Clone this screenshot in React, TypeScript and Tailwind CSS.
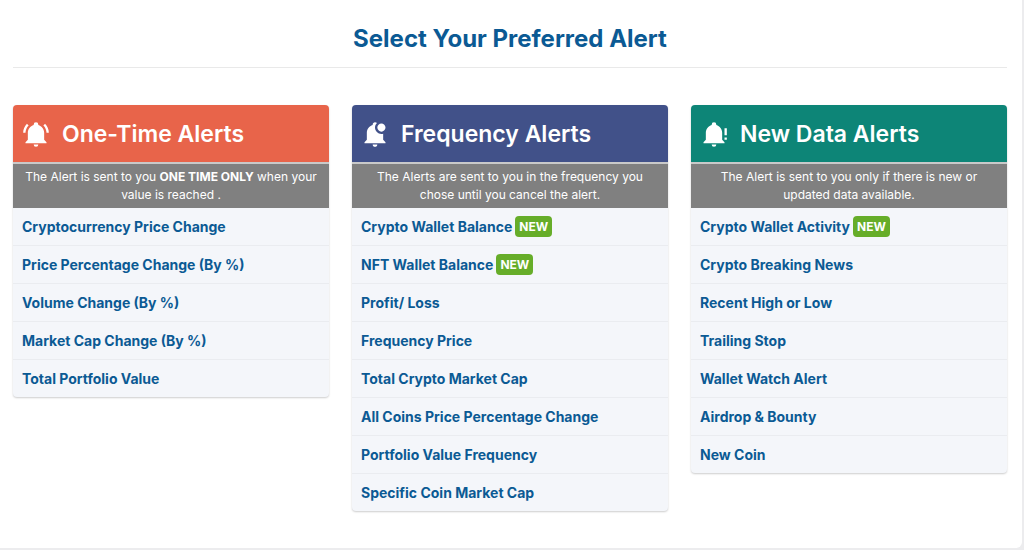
import * as React from "react";

interface AlertItem {
  name: string;
  isNew?: boolean;
}

interface AlertGroup {
  title: string;
  headerClasses: string;
  iconPath: string;
  description: React.ReactNode;
  items: AlertItem[];
}

const bellPath =
  "M21 19V20H3V19L5 17V11C5 7.9 7.03 5.17 10 4.29V4A2 2 0 0 1 14 4V4.29C16.97 5.17 19 7.9 19 11V17L21 19M14 21A2 2 0 0 1 10 21Z";

const bellRingPath =
  bellPath +
  "M19.75 3.19L18.33 4.61C20.04 6.3 21 8.6 21 11H23C23 8.07 21.84 5.25 19.75 3.19M1 11H3C3 8.6 3.96 6.3 5.67 4.61L4.25 3.19C2.16 5.25 1 8.07 1 11Z";

const bellAlertPath = bellPath + "M23 7V13H21V7ZM21 15H23V17H21Z";

const bellBadgePath =
  "M19 17V11.8C18.5 11.9 18 12 17.5 12C14.5 12 12 9.5 12 6.5C12 5 12.6 3.6 13.7 2.6C13.3 2.2 12.7 2 12 2C10.9 2 10 2.9 10 4V4.3C7 5.2 5 7.9 5 11V17L3 19V20H21V19L19 17M10 21C10 22.1 10.9 23 12 23S14 22.1 14 21H10M21 6.5C21 8.4 19.4 10 17.5 10S14 8.4 14 6.5S15.6 3 17.5 3S21 4.6 21 6.5Z";

const groups: AlertGroup[] = [
  {
    title: "One-Time Alerts",
    headerClasses: "bg-[#e8644a]",
    iconPath: bellRingPath,
    description: (
      <>
        The Alert is sent to you <b>ONE TIME ONLY</b> when your value is reached .
      </>
    ),
    items: [
      { name: "Cryptocurrency Price Change" },
      { name: "Price Percentage Change (By %)" },
      { name: "Volume Change (By %)" },
      { name: "Market Cap Change (By %)" },
      { name: "Total Portfolio Value" },
    ],
  },
  {
    title: "Frequency Alerts",
    headerClasses: "bg-[#415189]",
    iconPath: bellBadgePath,
    description:
      "The Alerts are sent to you in the frequency you chose until you cancel the alert.",
    items: [
      { name: "Crypto Wallet Balance", isNew: true },
      { name: "NFT Wallet Balance", isNew: true },
      { name: "Profit/ Loss" },
      { name: "Frequency Price" },
      { name: "Total Crypto Market Cap" },
      { name: "All Coins Price Percentage Change" },
      { name: "Portfolio Value Frequency" },
      { name: "Specific Coin Market Cap" },
    ],
  },
  {
    title: "New Data Alerts",
    headerClasses: "bg-[#0d8577]",
    iconPath: bellAlertPath,
    description:
      "The Alert is sent to you only if there is new or updated data available.",
    items: [
      { name: "Crypto Wallet Activity", isNew: true },
      { name: "Crypto Breaking News" },
      { name: "Recent High or Low" },
      { name: "Trailing Stop" },
      { name: "Wallet Watch Alert" },
      { name: "Airdrop & Bounty" },
      { name: "New Coin" },
    ],
  },
];

const AlertCard = ({ group }: { group: AlertGroup }) => {
  return (
    <section className="overflow-hidden rounded bg-[#f4f6fa] shadow-[0_1px_2px_rgba(0,0,0,0.2)]">
      <div
        className={`flex h-[59px] items-center gap-3 border-b-2 border-[#c9c9c9] px-[9px] text-white ${group.headerClasses}`}
      >
        <svg viewBox="0 0 24 24" className="size-7 shrink-0" fill="currentColor" aria-hidden="true">
          <path d={group.iconPath} />
        </svg>
        <h2 className="pt-px text-[23px] font-semibold whitespace-nowrap">{group.title}</h2>
      </div>
      <p className="bg-[#808080] px-3 py-1 text-center text-[12px] leading-[18px] text-white">
        {group.description}
      </p>
      <ul>
        {group.items.map((item) => (
          <li key={item.name} className="border-b border-[#eaecf0] last:border-b-0">
            <a
              href="#"
              className="flex h-[37px] items-center gap-[3px] px-[9px] text-[14px] font-bold text-[#0b5a94]"
            >
              {item.name}
              {item.isNew && (
                <span className="rounded bg-[#66ad29] px-1 text-[12px] leading-[21px] text-white">
                  NEW
                </span>
              )}
            </a>
          </li>
        ))}
      </ul>
    </section>
  );
};

const App = () => {
  return (
    <div className="bg-[#ececee] pr-[2px] pb-[2px] font-['Inter',sans-serif]">
      <main className="rounded-br-md bg-white pt-[21px] pr-[15px] pb-[37px] pl-[13px]">
        <h1 className="border-b border-[#e9e9e9] pb-[10px] text-center text-[24px] leading-9 font-bold text-[#0b5a94]">
          Select Your Preferred Alert
        </h1>
        <div className="mt-[37px] grid grid-cols-3 items-start gap-[23px]">
          {groups.map((group) => (
            <AlertCard key={group.title} group={group} />
          ))}
        </div>
      </main>
    </div>
  );
};

export default App;
